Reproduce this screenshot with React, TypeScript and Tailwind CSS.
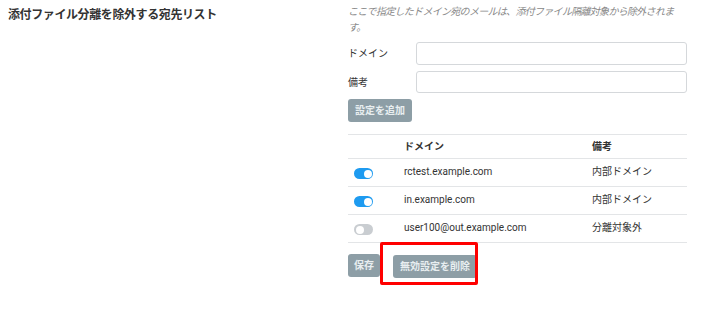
import { useState } from 'react';

type Entry = { id: number; domain: string; note: string; enabled: boolean };

const initialEntries: Entry[] = [
  { id: 1, domain: 'rctest.example.com', note: '内部ドメイン', enabled: true },
  { id: 2, domain: 'in.example.com', note: '内部ドメイン', enabled: true },
  { id: 3, domain: 'user100@out.example.com', note: '分離対象外', enabled: false },
];

const Toggle: React.FC<{ on: boolean; onClick: () => void }> = ({ on, onClick }) => (
  <button
    onClick={onClick}
    className={`flex h-[11px] w-[19px] items-center rounded-full px-[1.5px] ${
      on ? 'justify-end bg-[#1e9bf0]' : 'justify-start bg-[#c9cdd1]'
    }`}
  >
    <span className="h-[8px] w-[8px] rounded-full bg-white" />
  </button>
);

export default function App() {
  const [entries, setEntries] = useState<Entry[]>(initialEntries);

  const toggle = (id: number) =>
    setEntries((prev) => prev.map((e) => (e.id === id ? { ...e, enabled: !e.enabled } : e)));

  return (
    <div
      className="flex h-[316px] w-[723px] bg-white text-[#333]"
      style={{ fontFamily: 'Roboto, "Noto Sans CJK JP", sans-serif' }}
    >
      {/* 左: 見出し */}
      <div className="w-[348px] pl-[8px] pt-[6px]">
        <h2 className="text-[12px] font-bold tracking-[-0.4px] text-[#333]">
          添付ファイル分離を除外する宛先リスト
        </h2>
      </div>

      {/* 右: フォーム */}
      <div className="w-[339px] pt-[4px]">
        <p className="text-[10px] italic leading-[16px] tracking-[-0.7px] text-[#888]">
          ここで指定したドメイン宛のメールは、添付ファイル隔離対象から除外されます。
        </p>

        <div className="mt-[6px] flex items-center">
          <label className="w-[68px] text-[10px]">ドメイン</label>
          <input className="h-[23px] flex-1 rounded-[3px] border border-[#d5d8db] bg-white" />
        </div>
        <div className="mt-[6px] flex items-center">
          <label className="w-[68px] text-[10px]">備考</label>
          <input className="h-[22px] flex-1 rounded-[3px] border border-[#d5d8db] bg-white" />
        </div>
        <button className="mt-[6px] h-[23px] rounded-[3px] bg-[#8d9ea6] px-[7px] text-[10px] font-bold text-[#e8eef0]">
          設定を追加
        </button>

        <table className="mt-[12px] w-full border-t border-[#e3e5e7] text-[10px]">
          <thead>
            <tr className="h-[24px] border-b border-[#e3e5e7]">
              <th className="w-[56px]" />
              <th className="text-left font-bold">ドメイン</th>
              <th className="w-[95px] text-left font-bold">備考</th>
            </tr>
          </thead>
          <tbody>
            {entries.map((e) => (
              <tr key={e.id} className="h-[28px] border-b border-[#e3e5e7]">
                <td className="pl-[6px] pt-[2px]">
                  <Toggle on={e.enabled} onClick={() => toggle(e.id)} />
                </td>
                <td className="pb-[3px]">{e.domain}</td>
                <td className="pb-[3px]">{e.note}</td>
              </tr>
            ))}
          </tbody>
        </table>

        <div className="mt-[10px] flex items-center gap-[4px]">
          <button className="h-[23px] rounded-[3px] bg-[#8d9ea6] px-[6px] text-[10px] font-bold text-[#e8eef0]">
            保存
          </button>
          {/* 赤枠ハイライト */}
          <div className="relative">
            <div className="pointer-events-none absolute -left-[4px] -top-[11px] h-[43px] w-[98px] rounded-[2px] border-[3px] border-[#ff0000]" />
            <button className="ml-[9px] h-[23px] rounded-[3px] bg-[#8d9ea6] px-[7px] text-[10px] font-bold text-[#e8eef0]">
              無効設定を削除
            </button>
          </div>
        </div>
      </div>
    </div>
  );
}
